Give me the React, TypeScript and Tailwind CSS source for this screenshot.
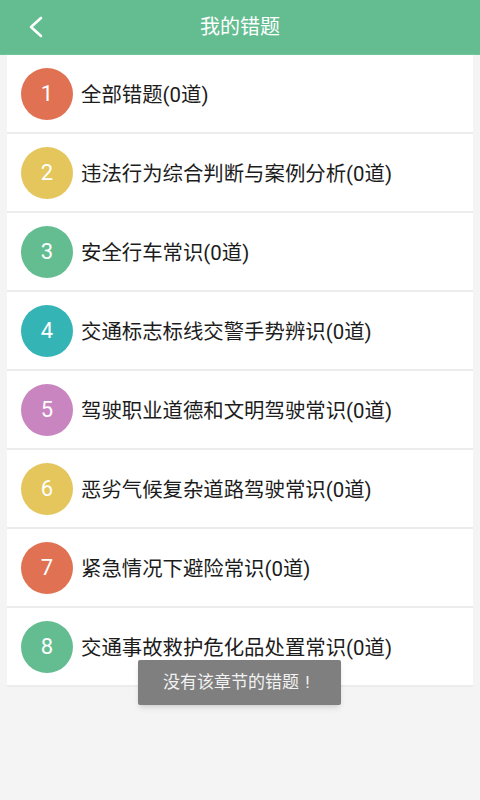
import React from 'react';

const ITEMS = [
  { title: '全部错题(0道)', color: 'bg-[#e07153]' },
  { title: '违法行为综合判断与案例分析(0道)', color: 'bg-[#e5c65c]' },
  { title: '安全行车常识(0道)', color: 'bg-[#64bd91]' },
  { title: '交通标志标线交警手势辨识(0道)', color: 'bg-[#35b4b6]' },
  { title: '驾驶职业道德和文明驾驶常识(0道)', color: 'bg-[#c985c0]' },
  { title: '恶劣气候复杂道路驾驶常识(0道)', color: 'bg-[#e5c65c]' },
  { title: '紧急情况下避险常识(0道)', color: 'bg-[#e07153]' },
  { title: '交通事故救护危化品处置常识(0道)', color: 'bg-[#64bd91]' },
];

const font = { fontFamily: '"Roboto", "Noto Sans CJK SC", sans-serif' };

const App: React.FC = () => {
  return (
    <div className="relative w-[480px] h-[800px] bg-[#f4f4f4] overflow-hidden" style={font}>
      {/* header */}
      <div className="relative h-[55px] bg-[#64bd91] flex items-center justify-center border-b border-[#6dc69a]">
        <svg className="absolute left-[28px] top-[16px]" width="16" height="22" viewBox="0 0 16 22" fill="none">
          <path d="M13 2 L3 11 L13 20" stroke="white" strokeWidth="2.6" strokeLinecap="round" strokeLinejoin="round" />
        </svg>
        <h1 className="text-white text-[20px]">我的错题</h1>
      </div>

      {/* list */}
      <div className="mx-[7px] bg-white">
        {ITEMS.map((item, idx) => (
          <div key={idx} className="h-[79px] border-b-2 border-[#ececec] flex items-center pl-[14px]">
            <div className={`w-[52px] h-[52px] rounded-full ${item.color} flex items-center justify-center text-white text-[22px]`}>
              {idx + 1}
            </div>
            <span className="ml-[8px] pt-[3px] text-[20.4px] text-[#1c1c1c]">{item.title}</span>
          </div>
        ))}
      </div>

      {/* toast */}
      <div className="absolute left-[138px] top-[660px] w-[203px] h-[45px] bg-[#7f7f7f] rounded-[2px] shadow-md flex items-center justify-center text-[#f2f2f2] text-[17px]">
        没有该章节的错题<span className="inline-block w-[17px] text-center">!</span>
      </div>
    </div>
  );
};

export default App;
